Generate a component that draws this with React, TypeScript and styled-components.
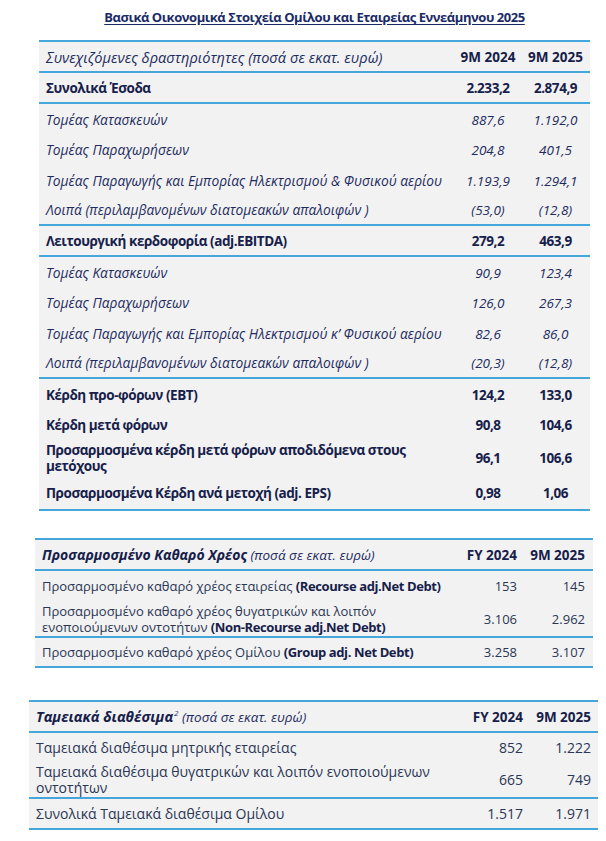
import React from 'react';
import styled, { createGlobalStyle } from 'styled-components';

const GlobalStyle = createGlobalStyle`
  html, body { margin: 0; padding: 0; background: #ffffff; }
  body {
    font-family: "Open Sans", "Noto Sans", sans-serif;
    color: #1c2957;
  }
  * { box-sizing: border-box; }
`;

const BLUE = '#45a6dc';
const BG = '#f2f2f2';
const NAVY = '#1d2b60';
const DARK = '#16204a';
const BODY2 = '#2a3654';

const Page = styled.div`
  width: 606px;
  padding: 9px 0 10px;
`;

const Title = styled.h1`
  margin: 0 0 15px 39px;
  width: 551px;
  text-align: center;
  font-size: 13px;
  line-height: 16px;
  font-weight: 700;
  letter-spacing: -0.45px;
  text-decoration: underline;
  text-underline-offset: 2px;
  color: #1a2a66;
`;

const Panel = styled.section<{ $left: number; $width: number; $gap: number }>`
  margin: ${(p) => p.$gap}px 0 0 ${(p) => p.$left}px;
  width: ${(p) => p.$width}px;
  background: ${BG};
  border-top: 2px solid ${BLUE};
  border-bottom: 2px solid ${BLUE};
`;

const Row = styled.div<{ $cols: string; $h: number; $rule?: boolean }>`
  display: grid;
  grid-template-columns: ${(p) => p.$cols};
  align-items: center;
  height: ${(p) => p.$h}px;
  border-bottom: ${(p) => (p.$rule ? `2px solid ${BLUE}` : 'none')};
`;

const Label = styled.div<{ $size: number; $bold?: boolean; $italic?: boolean; $color?: string }>`
  padding-left: 7px;
  font-size: ${(p) => p.$size}px;
  line-height: 16px;
  font-weight: ${(p) => (p.$bold ? 700 : 400)};
  font-style: ${(p) => (p.$italic ? 'italic' : 'normal')};
  letter-spacing: ${(p) => (p.$bold ? '-0.45px' : 'normal')};
  color: ${(p) => p.$color || NAVY};
  white-space: nowrap;
`;

const Num = styled.div<{ $align: 'center' | 'right'; $size: number; $pad?: number; $bold?: boolean; $tight?: boolean; $italic?: boolean; $color?: string }>`
  text-align: ${(p) => p.$align};
  padding-right: ${(p) => p.$pad || 0}px;
  font-size: ${(p) => p.$size}px;
  line-height: 16px;
  font-weight: ${(p) => (p.$bold ? 700 : 400)};
  font-style: ${(p) => (p.$italic ? 'italic' : 'normal')};
  letter-spacing: ${(p) => (p.$tight ? '-0.45px' : 'normal')};
  color: ${(p) => p.$color || NAVY};
  white-space: nowrap;
`;

const Strong = styled.b`
  font-weight: 700;
  letter-spacing: -0.4px;
  color: ${DARK};
`;

const StrongItalic = styled.b<{ $size: number }>`
  font-weight: 700;
  font-style: italic;
  font-size: ${(p) => p.$size}px;
  color: ${DARK};
`;

const Sup = styled.sup`
  font-size: 8px;
  vertical-align: top;
  line-height: 10px;
  position: relative;
  top: -1px;
  margin-left: 1px;
`;

type R1 = { label: React.ReactNode; a: string; b: string; h: number; bold?: boolean; italic?: boolean; rule?: boolean; head?: boolean };

const rows1: R1[] = [
  { label: 'Συνεχιζόμενες δραστηριότητες (ποσά σε εκατ. ευρώ)', a: '9M 2024', b: '9M 2025', h: 31, italic: true, rule: true, head: true },
  { label: 'Συνολικά Έσοδα', a: '2.233,2', b: '2.874,9', h: 31, bold: true, rule: true },
  { label: 'Τομέας Κατασκευών', a: '887,6', b: '1.192,0', h: 31, italic: true },
  { label: 'Τομέας Παραχωρήσεων', a: '204,8', b: '401,5', h: 30, italic: true },
  { label: 'Τομέας Παραγωγής και Εμπορίας Ηλεκτρισμού & Φυσικού αερίου', a: '1.193,9', b: '1.294,1', h: 31, italic: true },
  { label: 'Λοιπά (περιλαμβανομένων διατομεακών απαλοιφών )', a: '(53,0)', b: '(12,8)', h: 30, italic: true, rule: true },
  { label: 'Λειτουργική κερδοφορία (adj.EBITDA)', a: '279,2', b: '463,9', h: 31, bold: true, rule: true },
  { label: 'Τομέας Κατασκευών', a: '90,9', b: '123,4', h: 31, italic: true },
  { label: 'Τομέας Παραχωρήσεων', a: '126,0', b: '267,3', h: 30, italic: true },
  { label: 'Τομέας Παραγωγής και Εμπορίας Ηλεκτρισμού κ’ Φυσικού αερίου', a: '82,6', b: '86,0', h: 31, italic: true },
  { label: 'Λοιπά (περιλαμβανομένων διατομεακών απαλοιφών )', a: '(20,3)', b: '(12,8)', h: 30, italic: true, rule: true },
  { label: 'Κέρδη προ-φόρων (EBT)', a: '124,2', b: '133,0', h: 31, bold: true },
  { label: 'Κέρδη μετά φόρων', a: '90,8', b: '104,6', h: 29, bold: true },
  {
    label: (
      <>
        Προσαρμοσμένα κέρδη μετά φόρων αποδιδόμενα στους
        <br />
        μετόχους
      </>
    ),
    a: '96,1',
    b: '106,6',
    h: 37,
    bold: true,
  },
  { label: 'Προσαρμοσμένα Κέρδη ανά μετοχή (adj. EPS)', a: '0,98', b: '1,06', h: 33, bold: true },
];

type R2 = { label: React.ReactNode; a: string; b: string; h: number; rule?: boolean };

const rows2: R2[] = [
  {
    label: (
      <>
        Προσαρμοσμένο καθαρό χρέος εταιρείας <Strong>(Recourse adj.Net Debt)</Strong>
      </>
    ),
    a: '153',
    b: '145',
    h: 30,
  },
  {
    label: (
      <>
        Προσαρμοσμένο καθαρό χρέος θυγατρικών και λοιπόν
        <br />
        ενοποιούμενων οντοτήτων <Strong>(Non-Recourse adj.Net Debt)</Strong>
      </>
    ),
    a: '3.106',
    b: '2.962',
    h: 37,
    rule: true,
  },
  {
    label: (
      <>
        Προσαρμοσμένο καθαρό χρέος Ομίλου <Strong>(Group adj. Net Debt)</Strong>
      </>
    ),
    a: '3.258',
    b: '3.107',
    h: 28,
  },
];

const rows3: R2[] = [
  { label: 'Ταμειακά διαθέσιμα μητρικής εταιρείας', a: '852', b: '1.222', h: 30 },
  {
    label: (
      <>
        Ταμειακά διαθέσιμα θυγατρικών και λοιπόν ενοποιούμενων
        <br />
        οντοτήτων
      </>
    ),
    a: '665',
    b: '749',
    h: 36,
    rule: true,
  },
  { label: 'Συνολικά Ταμειακά διαθέσιμα Ομίλου', a: '1.517', b: '1.971', h: 29 },
];

const SideTable: React.FC<{
  left: number;
  width: number;
  gap: number;
  cols: string;
  pad: number;
  size: number;
  head: React.ReactNode;
  rows: R2[];
}> = ({ left, width, gap, cols, pad, size, head, rows }) => (
  <Panel $left={left} $width={width} $gap={gap}>
    <Row $cols={cols} $h={31} $rule>
      <Label $size={13.5} $italic>
        {head}
      </Label>
      <Num $size={13.5} $align="right" $pad={pad} $bold $color={DARK}>
        FY 2024
      </Num>
      <Num $size={13.5} $align="right" $pad={pad} $bold $color={DARK}>
        9M 2025
      </Num>
    </Row>
    {rows.map((r, i) => (
      <Row key={i} $cols={cols} $h={r.h} $rule={r.rule}>
        <Label $size={size} $color={BODY2}>
          {r.label}
        </Label>
        <Num $size={size} $align="right" $pad={pad} $color={BODY2}>
          {r.a}
        </Num>
        <Num $size={size} $align="right" $pad={pad} $color={BODY2}>
          {r.b}
        </Num>
      </Row>
    ))}
  </Panel>
);

const COLS1 = '1fr 66px 69px';

export default function App() {
  return (
    <Page>
      <GlobalStyle />
      <Title>Βασικά Οικονομικά Στοιχεία Ομίλου και Εταιρείας Εννεάμηνου 2025</Title>

      <Panel $left={39} $width={551} $gap={0}>
        {rows1.map((r, i) => {
          const strong = r.bold || r.head;
          const color = strong ? DARK : undefined;
          const size = r.bold ? 13.5 : r.head ? 14.6 : 13.75;
          return (
            <Row key={i} $cols={COLS1} $h={r.h} $rule={r.rule}>
              <Label $size={size} $bold={r.bold} $italic={r.italic} $color={r.bold ? DARK : undefined}>
                {r.label}
              </Label>
              <Num $size={13.5} $align="center" $bold={strong} $tight={r.bold} $italic={r.italic && !r.head} $color={color}>
                {r.a}
              </Num>
              <Num $size={13.5} $align="center" $bold={strong} $tight={r.bold} $italic={r.italic && !r.head} $color={color}>
                {r.b}
              </Num>
            </Row>
          );
        })}
      </Panel>

      <SideTable
        left={35}
        width={558}
        gap={27}
        cols="1fr 60px 68px"
        pad={8}
        size={13}
        head={
          <>
            <StrongItalic $size={14}>Προσαρμοσμένο Καθαρό Χρέος</StrongItalic> (ποσά σε εκατ. ευρώ)
          </>
        }
        rows={rows2}
      />

      <SideTable
        left={29}
        width={569}
        gap={32}
        cols="1fr 68px 68px"
        pad={7}
        size={14}
        head={
          <>
            <StrongItalic $size={14.4}>Ταμειακά διαθέσιμα</StrongItalic>
            <Sup>2</Sup> (ποσά σε εκατ. ευρώ)
          </>
        }
        rows={rows3}
      />
    </Page>
  );
}
